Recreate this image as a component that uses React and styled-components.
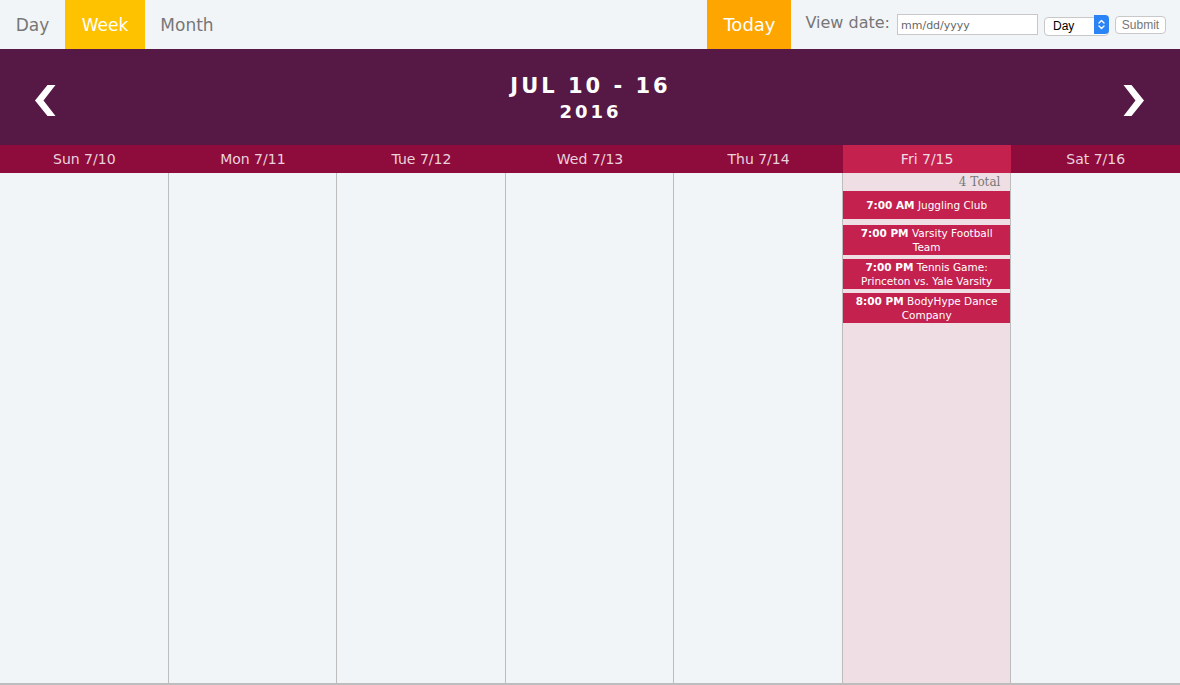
import React from 'react';
import styled, { createGlobalStyle } from 'styled-components';

const GlobalStyle = createGlobalStyle`
  html, body {
    margin: 0;
    padding: 0;
    background: #f2f5f8;
    font-family: Verdana, "DejaVu Sans", sans-serif;
  }
`;

const Page = styled.div`
  width: 1180px;
  height: 685px;
  display: flex;
  flex-direction: column;
  overflow: hidden;
`;

const TopBar = styled.div`
  height: 49px;
  display: flex;
  align-items: stretch;
  background: #f2f5f8;
`;

const Tab = styled.div`
  display: flex;
  align-items: center;
  justify-content: center;
  width: ${p => p.w}px;
  font-size: 17px;
  color: ${p => (p.active ? '#fff' : '#777')};
  background: ${p => (p.active ? '#ffc200' : 'transparent')};
`;

const Spacer = styled.div`
  flex: 1;
`;

const TodayButton = styled.div`
  display: flex;
  align-items: center;
  justify-content: center;
  width: 84px;
  background: #ffa500;
  color: #fff;
  font-size: 18px;
`;

const DateForm = styled.div`
  display: flex;
  align-items: center;
  padding: 0 14px;
  gap: 6px;
`;

const Label = styled.span`
  font-size: 16px;
  color: #777;
  margin-right: 1px;
  position: relative;
  top: -2px;
`;

const DateInput = styled.input`
  box-sizing: border-box;
  width: 141px;
  height: 21px;
  border: 1px solid #c8c8c8;
  background: #fff;
  padding: 1px 3px 0;
  font-family: "DejaVu Sans", sans-serif;
  font-size: 11px;
  color: #555;
  outline: none;
  &::placeholder {
    color: #666;
  }
`;

const SelectWrap = styled.div`
  position: relative;
  width: 65px;
  height: 19px;
`;

const Select = styled.select`
  appearance: none;
  box-sizing: border-box;
  width: 100%;
  height: 100%;
  border: 1px solid #c8c8c8;
  border-radius: 4px;
  background: #fff;
  padding: 0 0 0 8px;
  font-family: "Liberation Sans", Arial, sans-serif;
  font-size: 12px;
  color: #000;
`;

const SelectArrow = styled.div`
  position: absolute;
  top: 0;
  right: 0;
  width: 15px;
  height: 19px;
  background: #2a84f5;
  border-radius: 0 4px 4px 0;
  display: flex;
  align-items: center;
  justify-content: center;
  pointer-events: none;
`;

const SubmitButton = styled.button`
  box-sizing: border-box;
  width: 51px;
  height: 18px;
  padding: 0;
  border: 1px solid #c8c8c8;
  border-radius: 4px;
  background: #fff;
  font-family: "Liberation Sans", Arial, sans-serif;
  font-size: 12px;
  color: #777;
`;

const WeekHeader = styled.div`
  height: 96px;
  background: #561845;
  display: flex;
  align-items: center;
  justify-content: space-between;
  padding: 0 36px 0 35px;
  color: #fff;
`;

const Arrow = styled.svg`
  display: block;
  width: 21px;
  height: 31px;
  margin-top: 6px;
`;

const Title = styled.div`
  display: flex;
  flex-direction: column;
  align-items: center;
  font-weight: bold;
  letter-spacing: 3px;
  margin-top: 3px;
  margin-left: 2px;
`;

const TitleLine = styled.div`
  font-size: ${p => p.size}px;
  line-height: 25px;
`;

const DayRow = styled.div`
  display: grid;
  grid-template-columns: repeat(7, 1fr);
  height: 28px;
  background: #8e0c3c;
`;

const DayName = styled.div`
  display: flex;
  align-items: center;
  justify-content: center;
  font-size: 14px;
  color: ${p => (p.today ? '#f0dde4' : '#ead2dc')};
  background: ${p => (p.today ? '#c4214f' : 'transparent')};
`;

const Body = styled.div`
  flex: 1;
  display: grid;
  grid-template-columns: repeat(7, 1fr);
  border-bottom: 2px solid #bdbdbd;
`;

const Column = styled.div`
  border-right: ${p => (p.last ? 'none' : '1px solid #bdbdbd')};
  background: ${p => (p.today ? '#efdfe5' : '#f2f5f8')};
  display: flex;
  flex-direction: column;
  min-width: 0;
`;

const Total = styled.div`
  text-align: right;
  font-family: "DejaVu Serif", Georgia, serif;
  font-size: 12px;
  color: #777;
  padding: 1px 10px 0 0;
  height: 16px;
  line-height: 16px;
`;

const EventList = styled.div`
  display: flex;
  flex-direction: column;
  gap: 4px;
  margin-top: 1px;
`;

const Event = styled.div`
  background: #c4214f;
  color: #fff;
  font-family: "DejaVu Sans", sans-serif;
  font-size: 10.5px;
  line-height: 14px;
  text-align: center;
  padding: ${p => (p.single ? '7px 4px 7px' : '1px 4px 1px')};
  margin-bottom: ${p => (p.single ? '2px' : '0')};
`;

const EventLine = styled.div`
  white-space: nowrap;
`;

const Time = styled.b`
  font-weight: bold;
`;

const days = [
  'Sun 7/10',
  'Mon 7/11',
  'Tue 7/12',
  'Wed 7/13',
  'Thu 7/14',
  'Fri 7/15',
  'Sat 7/16',
];

const events = [
  { time: '7:00 AM', lines: ['Juggling Club'], single: true },
  { time: '7:00 PM', lines: ['Varsity Football', 'Team'] },
  { time: '7:00 PM', lines: ['Tennis Game:', 'Princeton vs. Yale Varsity'] },
  { time: '8:00 PM', lines: ['BodyHype Dance', 'Company'] },
];

const TODAY = 5;

const App = () => {
  return (
    <Page>
      <GlobalStyle />
      <TopBar>
        <Tab w={65}>Day</Tab>
        <Tab w={80} active>Week</Tab>
        <Tab w={84}>Month</Tab>
        <Spacer />
        <TodayButton>Today</TodayButton>
        <DateForm>
          <Label>View date:</Label>
          <DateInput placeholder="mm/dd/yyyy" />
          <SelectWrap>
            <Select defaultValue="day">
              <option value="day">Day</option>
              <option value="week">Week</option>
              <option value="month">Month</option>
            </Select>
            <SelectArrow>
              <svg width="7" height="11" viewBox="0 0 7 11" fill="none" stroke="#fff" strokeWidth="1.4" strokeLinecap="round" strokeLinejoin="round">
                <path d="M1 4 L3.5 1.5 L6 4" />
                <path d="M1 7 L3.5 9.5 L6 7" />
              </svg>
            </SelectArrow>
          </SelectWrap>
          <SubmitButton>Submit</SubmitButton>
        </DateForm>
      </TopBar>

      <WeekHeader>
        <Arrow viewBox="0 0 21 31">
          <polygon points="0,15.5 12.5,0 20.5,0 8.5,15.5 20.5,31 12.5,31" fill="#fff" />
        </Arrow>
        <Title>
          <TitleLine size={21}>JUL 10 - 16</TitleLine>
          <TitleLine size={18}>2016</TitleLine>
        </Title>
        <Arrow viewBox="0 0 21 31">
          <polygon points="21,15.5 8.5,0 0.5,0 12.5,15.5 0.5,31 8.5,31" fill="#fff" />
        </Arrow>
      </WeekHeader>

      <DayRow>
        {days.map((d, i) => (
          <DayName key={d} today={i === TODAY}>
            {d}
          </DayName>
        ))}
      </DayRow>

      <Body>
        {days.map((d, i) => (
          <Column key={d} today={i === TODAY} last={i === 6}>
            {i === TODAY && (
              <>
                <Total>4 Total</Total>
                <EventList>
                  {events.map(ev => (
                    <Event key={ev.time + ev.lines[0]} single={ev.single}>
                      <EventLine>
                        <Time>{ev.time}</Time> {ev.lines[0]}
                      </EventLine>
                      {ev.lines[1] && <EventLine>{ev.lines[1]}</EventLine>}
                    </Event>
                  ))}
                </EventList>
              </>
            )}
          </Column>
        ))}
      </Body>
    </Page>
  );
};

export default App;
